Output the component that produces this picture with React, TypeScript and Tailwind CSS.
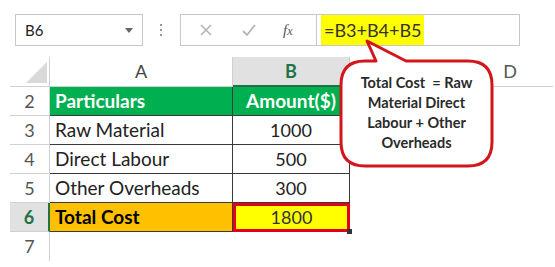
import React from "react";

type Row = {
  num: number;
  label: string;
  amount: string;
  kind: "head" | "plain" | "total";
};

const rows: Row[] = [
  { num: 2, label: "Particulars", amount: "Amount($)", kind: "head" },
  { num: 3, label: "Raw Material", amount: "1000", kind: "plain" },
  { num: 4, label: "Direct Labour", amount: "500", kind: "plain" },
  { num: 5, label: "Other Overheads", amount: "300", kind: "plain" },
  { num: 6, label: "Total Cost", amount: "1800", kind: "total" },
];

const Toolbar = () => (
  <div className="flex items-center pt-[14px] pl-[15px]">
    {/* name box */}
    <div className="flex items-center justify-between w-[128px] h-[32px] border border-[#c8c8c8] pl-[9px] pr-[9px]">
      <span className="text-[15px] text-[#222]">B6</span>
      <span className="w-0 h-0 border-l-[4px] border-r-[4px] border-t-[5px] border-l-transparent border-r-transparent border-t-[#666]" />
    </div>
    <div className="flex flex-col gap-[3px] ml-[17px] mr-[18px]">
      <span className="w-[2px] h-[2px] bg-[#999]" />
      <span className="w-[2px] h-[2px] bg-[#999]" />
      <span className="w-[2px] h-[2px] bg-[#999]" />
    </div>
    {/* cancel / enter / insert function */}
    <div className="flex items-center w-[137px] h-[32px] border border-[#c8c8c8] text-[#b0b0b0]">
      <svg width="14" height="14" viewBox="0 0 14 14" className="ml-[18px]">
        <path d="M2 2 L12 12 M12 2 L2 12" stroke="#b4b4b4" strokeWidth="1.6" fill="none" />
      </svg>
      <svg width="16" height="14" viewBox="0 0 16 14" className="ml-[28px]">
        <path d="M2 8 L6 12 L14 2" stroke="#b4b4b4" strokeWidth="1.8" fill="none" />
      </svg>
      <span className="ml-[26px] italic text-[15px] text-[#555] font-['Liberation_Serif',serif]">
        f<span className="text-[12px]">x</span>
      </span>
    </div>
    {/* formula input */}
    <div className="flex items-stretch w-[203px] h-[32px] border border-l-0 border-[#c8c8c8] pl-[4px]">
      <div className="flex items-center w-[103px] bg-[#ffff00] pl-[3px] text-[18px] text-[#333]">
        =B3+B4+B5
      </div>
    </div>
  </div>
);

const Sheet = () => (
  <div className="grid grid-cols-[40px_183px_117px_117px_86px] ml-[10px] mt-[11px] text-[19px] text-[#222]">
    {/* column headers */}
    <div className="relative h-[30px] border-r border-b border-[#d0d0d0]">
      <span className="absolute right-[2px] bottom-[3px] w-0 h-0 border-l-[21px] border-t-[21px] border-l-transparent border-t-transparent border-r-0 border-b-[21px] border-b-[#d9d9d9]" />
    </div>
    <div className="h-[30px] flex items-center justify-center border-r border-b border-[#d0d0d0] text-[18px] text-[#444]">
      A
    </div>
    <div className="h-[30px] flex items-center justify-center bg-[#e1e1e1] border-r border-b-2 border-r-[#c8c8c8] border-b-[#217346] text-[18px] font-bold text-[#217346]">
      B
    </div>
    <div className="h-[30px] border-b border-[#d0d0d0]" />
    <div className="h-[30px] flex items-center justify-center border-b border-[#d0d0d0] text-[18px] text-[#555]">
      D
    </div>

    {rows.map((r) => {
      const isHead = r.kind === "head";
      const isTotal = r.kind === "total";
      return (
        <React.Fragment key={r.num}>
          <div
            className={
              isTotal
                ? "h-[29px] flex items-center justify-center bg-[#e1e1e1] border-r-2 border-r-[#217346] border-b border-b-[#d0d0d0] text-[18px] font-bold text-[#217346]"
                : "h-[29px] flex items-center justify-center border-r border-b border-[#d0d0d0] text-[18px] text-[#555]"
            }
          >
            {r.num}
          </div>
          <div
            className={
              isHead
                ? "h-[29px] flex items-center pl-[5px] bg-[#00b050] border-r border-b border-[#3a3a3a] font-bold text-white"
                : isTotal
                ? "h-[29px] flex items-center pl-[5px] bg-[#ffc000] border-r border-b border-[#3a3a3a] font-bold text-black"
                : "h-[29px] flex items-center pl-[5px] border-r border-b border-[#3a3a3a]"
            }
          >
            {r.label}
          </div>
          <div
            className={
              isHead
                ? "h-[29px] flex items-center justify-center bg-[#00b050] border-r border-b border-[#3a3a3a] font-bold text-white"
                : isTotal
                ? "relative h-[29px] flex items-center justify-center bg-[#ffff00] border-[3px] border-[#e3001b] text-[18px] text-[#333]"
                : "h-[29px] flex items-center justify-center border-r border-b border-[#3a3a3a] text-[18px]"
            }
          >
            {r.amount}
            {isTotal && (
              <span className="absolute right-[-5px] bottom-[-5px] w-[5px] h-[5px] bg-[#333]" />
            )}
          </div>
          <div className="h-[29px]" />
          <div className="h-[29px]" />
        </React.Fragment>
      );
    })}

    <div className="h-[29px] flex items-center justify-center border-r border-[#d0d0d0] text-[18px] text-[#555]">
      7
    </div>
    <div className="h-[29px]" />
    <div className="h-[29px]" />
    <div className="h-[29px]" />
    <div className="h-[29px]" />
  </div>
);

// speech bubble tying the formula to its meaning
const Callout = () => (
  <>
    <svg
      className="absolute left-0 top-0 pointer-events-none"
      width="555"
      height="267"
      viewBox="0 0 555 267"
    >
      <path
        d="M365 61 L376 61 L367 41 L406 61 L468 61 Q492 61 492 85 L492 142 Q492 166 468 166 L365 166 Q341 166 341 142 L341 85 Q341 61 365 61 Z"
        fill="white"
        stroke="#d3161c"
        strokeWidth="3"
        strokeLinejoin="round"
      />
    </svg>
    <div className="absolute left-[341px] top-[73px] w-[151px] text-center text-[14.5px] leading-[20px] font-bold text-[#2a2a2a]">
      Total Cost &nbsp;= Raw
      <br />
      Material Direct
      <br />
      Labour + Other
      <br />
      Overheads
    </div>
  </>
);

export default function App() {
  return (
    <div className="relative w-[555px] h-[267px] bg-white overflow-hidden font-['Lato','Open_Sans',sans-serif]">
      <Toolbar />
      <Sheet />
      <Callout />
    </div>
  );
}
